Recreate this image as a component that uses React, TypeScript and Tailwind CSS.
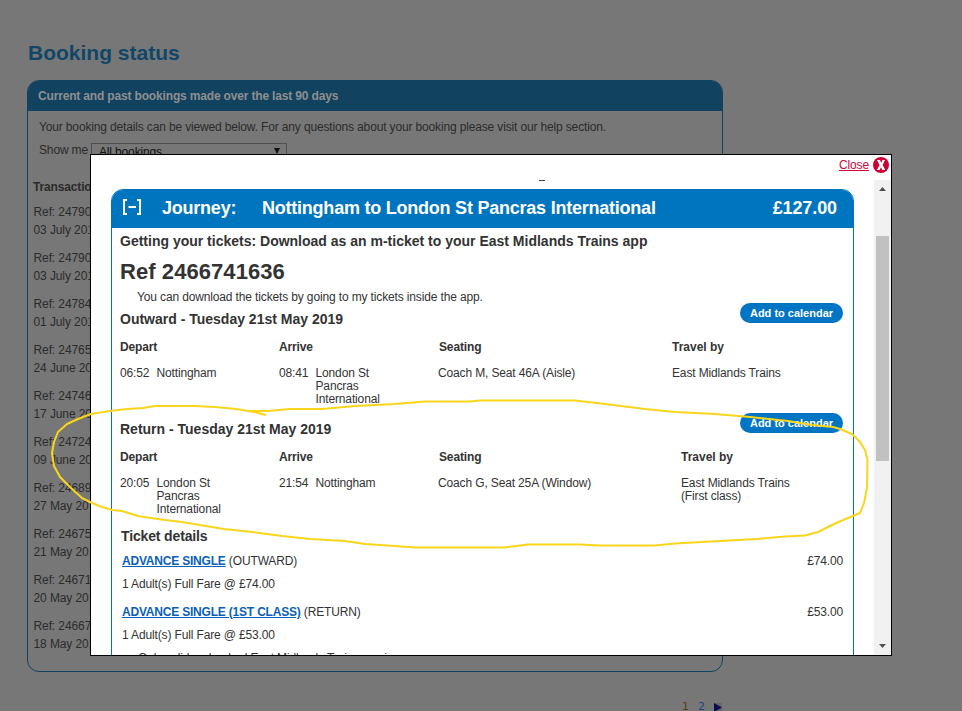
import React from "react";

const bookings = [
  ["Ref: 24790", "03 July 201"],
  ["Ref: 24790", "03 July 201"],
  ["Ref: 24784", "01 July 201"],
  ["Ref: 24765", "24 June 20"],
  ["Ref: 24746", "17 June 20"],
  ["Ref: 24724", "09 June 20"],
  ["Ref: 24689", "27 May 20"],
  ["Ref: 24675", "21 May 201"],
  ["Ref: 24671", "20 May 201"],
  ["Ref: 24667", "18 May 201"],
];

type LegProps = {
  title: string;
  depart: [string, string];
  arrive: [string, string];
  seat: string;
  travel: string;
  columns: string;
};

function Stop({ time, place }: { time: string; place: string }) {
  return (
    <div className="flex">
      <span className="w-[36.5px] shrink-0">{time}</span>
      <span className="w-[72px]">{place}</span>
    </div>
  );
}

function Leg({ title, depart, arrive, seat, travel, columns }: LegProps) {
  return (
    <section className="h-[110px] pl-2">
      <div className="flex h-[26px] justify-between pr-2.5">
        <h3 className="text-[14px] leading-[26px] font-bold tracking-normal">{title}</h3>
        <button className="-mt-[3px] h-5 w-[103px] rounded-full bg-[#0075c4] text-[11px] leading-5 font-bold tracking-normal text-white">
          Add to calendar
        </button>
      </div>
      <div className={`grid h-[30px] leading-[30px] font-bold ${columns}`}>
        <span>Depart</span>
        <span>Arrive</span>
        <span className="pl-px">Seating</span>
        <span className="tracking-normal">Travel by</span>
      </div>
      <div className={`grid pt-[5px] leading-[13px] ${columns}`}>
        <Stop time={depart[0]} place={depart[1]} />
        <Stop time={arrive[0]} place={arrive[1]} />
        <span>{seat}</span>
        <span className="whitespace-pre-line">{travel}</span>
      </div>
    </section>
  );
}

function Fare({ name, leg, price }: { name: string; leg: string; price: string }) {
  return (
    <div className="h-[51px] pr-2.5 pl-[10px]">
      <div className="flex justify-between leading-[30px]">
        <span>
          <a className="font-bold tracking-[-0.2px] text-[#0a5fb8] underline">{name}</a> {leg}
        </span>
        <span>{price}</span>
      </div>
      <p className="leading-4">1 Adult(s) Full Fare @ {price}</p>
    </div>
  );
}

function BookingPage() {
  return (
    <main className="h-[711px] w-[723px] pl-[27px] text-[#2b2b2b]">
      <h1 className="h-20 pt-[38px] pl-px text-[21px] leading-[30px] font-bold text-[#114667]">Booking status</h1>
      <section className="h-[592px] overflow-hidden rounded-xl border border-[#114260] text-[12px] tracking-[-0.15px]">
        <h2 className="h-[30px] bg-[#114260] pl-2.5 leading-[30px] font-bold tracking-[-0.165px] text-[#8f8f8f]">
          Current and past bookings made over the last 90 days
        </h2>
        <p className="h-8 pl-[11px] leading-8">
          Your booking details can be viewed below. For any questions about your booking please visit our help section.
        </p>
        <div className="flex h-[34px] pl-[11px]">
          <span className="w-[52px] leading-[14px]">Show me</span>
          <div className="flex h-5 w-[196px] justify-between border border-[#505050] pr-[5px] pl-[7px] text-[12px] leading-[17px] text-[#111]">
            <span>All bookings</span>
            <span className="pt-[9px]">
              <svg width="8" height="6" className="-mt-[5px]"><path d="M1 0h6L4 6z" fill="#111" /></svg>
            </span>
          </div>
        </div>
        <h3 className="h-[26px] pt-px pl-[5px] leading-[18px] font-bold">Transaction</h3>
        {bookings.map(([reference, date], i) => (
          <div key={i} className="h-[46px] pl-[5.5px] leading-[18px] tracking-[-0.1px]">
            <p>{reference}</p>
            <p>{date}</p>
          </div>
        ))}
      </section>
      <nav className="flex justify-end gap-[9px] pt-[27px] font-['DejaVu_Sans',sans-serif] text-[11px] leading-4 text-[#154a78]">
        <span className="text-[#5a4010]">1</span>
        <span>2</span>
        <svg width="8" height="9" className="mt-1 mr-px"><rect width="8" height="9" fill="#686868" /><path d="M0 0L8 4.5L0 9z" fill="#0c0c50" /></svg>
      </nav>
    </main>
  );
}

function Dialog() {
  return (
    <div className="absolute top-[154px] left-[90px] flex h-[502px] w-[802px] flex-col border border-black bg-white text-[12px] tracking-[-0.14px] text-[#333]">
      <div className="flex h-[25px] justify-end gap-1 pr-0.5">
        <a className="leading-[20px] text-[#cb0538] underline">Close</a>
        <svg width="16" height="16" viewBox="0 0 16 16" className="mt-0.5">
          <circle cx="8" cy="8" r="8" fill="#cc0033" />
          <path d="M4 3H7L8.200 5.800L9.500 3H12L9.700 8L12.200 13H9.200L8 10.200L6.600 13H4L6.500 8Z" fill="white" />
        </svg>
      </div>
      <div className="flex h-[475px]">
        <div className="w-[783px] overflow-hidden pl-5">
          <div className="h-[9px]"><div className="ml-[428px] h-px w-[6px] bg-[#444]" /></div>
          <div className="h-[560px] w-[743px] overflow-hidden rounded-t-xl border border-[#0075bf]">
            <h2 className="flex h-[38px] bg-[#0075bf] pr-4 pl-2.5 text-[18px] leading-[37px] font-bold tracking-[-0.23px] text-white">
              <svg width="20" height="17" className="mt-[9px] mr-5" fill="none" stroke="white">
                <path d="M5 1H2V15H5M15 1H18V15H15" strokeWidth="2" />
                <path d="M6.500 8H14" strokeWidth="2" />
              </svg>
              <span className="w-[100px]">Journey:</span>
              <span className="flex-1">Nottingham to London St Pancras International</span>
              <span className="tracking-[-0.1px]">£127.00</span>
            </h2>
            <p className="pl-2 text-[14px] leading-[26px] font-bold tracking-normal">
              Getting your tickets: Download as an m-ticket to your East Midlands Trains app
            </p>
            <p className="h-[34px] pt-px pl-2 text-[22px] leading-[34px] font-bold tracking-[0.07px]">Ref 2466741636</p>
            <p className="pl-[25px] leading-[18px]">You can download the tickets by going to my tickets inside the app.</p>
            <Leg
              title="Outward - Tuesday 21st May 2019"
              depart={["06:52", "Nottingham"]}
              arrive={["08:41", "London St Pancras International"]}
              seat="Coach M, Seat 46A (Aisle)"
              travel="East Midlands Trains"
              columns="grid-cols-[159px_159px_234px_1fr]"
            />
            <Leg
              title="Return - Tuesday 21st May 2019"
              depart={["20:05", "London St Pancras International"]}
              arrive={["21:54", "Nottingham"]}
              seat="Coach G, Seat 25A (Window)"
              travel={"East Midlands Trains\n(First class)"}
              columns="grid-cols-[159px_159px_243px_1fr]"
            />
            <h3 className="pl-[9px] text-[14px] leading-5 font-bold">Ticket details</h3>
            <Fare name="ADVANCE SINGLE" leg="(OUTWARD)" price="£74.00" />
            <Fare name="ADVANCE SINGLE (1ST CLASS)" leg="(RETURN)" price="£53.00" />
            <p className="pt-px pl-[26px] leading-[18px]">Only valid on booked East Midlands Trains services</p>
          </div>
        </div>
        <div className="flex w-[17px] flex-col items-center bg-[#f1f1f1]">
          <svg width="7" height="4" className="mt-[7px] mb-[45px]"><path d="M0 4L3.5 0L7 4z" fill="#505050" /></svg>
          <div className="h-[225px] w-[13px] bg-[#c1c1c1]" />
          <svg width="7" height="4" className="mt-auto mb-[7px]"><path d="M0 0L3.5 4L7 0z" fill="#505050" /></svg>
        </div>
      </div>
    </div>
  );
}

export default function App() {
  return (
    <div className="relative h-[711px] w-[962px] overflow-hidden bg-[#777] font-['Liberation_Sans',Arial,sans-serif]">
      <BookingPage />
      <Dialog />
      <svg className="pointer-events-none absolute inset-0" width="962" height="711" fill="none">
        <path
          d="M266 415L254 412L236 409L215 407L195 406L175 406L155 406L143 408L127 409L110 411L91 414L78 419L67 424L58 432L54 442L52 453L54 466L60 477L71 488L82 498L92 503L102 507L112 510L122 511L138 516L151 518L165 520L182 522L200 525L224 529L252 532L282 536L310 539L345 541L365 544L395 546L415 547.5L505 547.5L528 544.5L580 544.5L600 545.5L655 545.5L675 543.5L720 541L757 539L785 536.5L805 535.5L818 532L834 524L848 518L860 513L864 503L867 488L867.500 460L865 450L860 442L852 434L840 429L833 427L812 425L788 421L750 417L715 414L675 412L645 409L605 404L575 400.500L480 400.500L470 401.500L425 401.500L395 404L355 406L322 409L290 409L268 411L248 411"
          stroke="#f9d51c"
          strokeWidth="2"
          strokeLinejoin="round"
        />
      </svg>
    </div>
  );
}
